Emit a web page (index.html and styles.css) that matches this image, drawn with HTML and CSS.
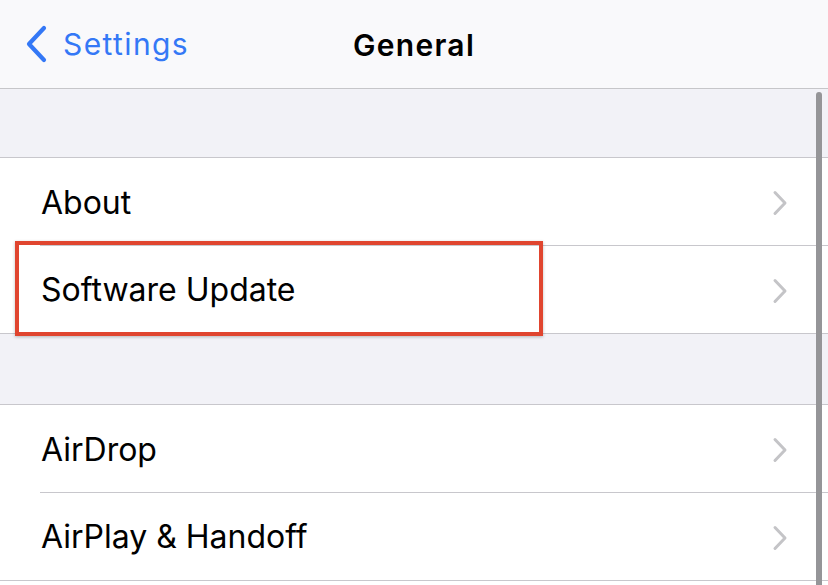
FILE: index.html
```html
<!DOCTYPE html>
<html>
<head>
<meta charset="utf-8">
<link rel="stylesheet" href="styles.css">
</head>
<body>
<div class="screen">
  <header class="nav">
    <div class="back">
      <svg class="back-icon" width="24" height="38" viewBox="0 0 24 38"><path d="M20 3 L5 19 L20 35" fill="none" stroke="#3478f6" stroke-width="4.2" stroke-linecap="round" stroke-linejoin="round"/></svg>
      <span class="back-label">Settings</span>
    </div>
    <div class="title">General</div>
  </header>
  <div class="spacer first"></div>
  <section class="group">
    <div class="row"><span class="label">About</span><svg class="chev" width="16" height="26" viewBox="0 0 16 26"><path d="M3 2.5 L13 13 L3 23.5" fill="none" stroke="#c4c4c7" stroke-width="3" stroke-linecap="round" stroke-linejoin="round"/></svg></div>
    <div class="row"><span class="label">Software Update</span><svg class="chev" width="16" height="26" viewBox="0 0 16 26"><path d="M3 2.5 L13 13 L3 23.5" fill="none" stroke="#c4c4c7" stroke-width="3" stroke-linecap="round" stroke-linejoin="round"/></svg></div>
  </section>
  <div class="spacer second"></div>
  <section class="group">
    <div class="row"><span class="label">AirDrop</span><svg class="chev" width="16" height="26" viewBox="0 0 16 26"><path d="M3 2.5 L13 13 L3 23.5" fill="none" stroke="#c4c4c7" stroke-width="3" stroke-linecap="round" stroke-linejoin="round"/></svg></div>
    <div class="row"><span class="label">AirPlay &amp; Handoff</span><svg class="chev" width="16" height="26" viewBox="0 0 16 26"><path d="M3 2.5 L13 13 L3 23.5" fill="none" stroke="#c4c4c7" stroke-width="3" stroke-linecap="round" stroke-linejoin="round"/></svg></div>
  </section>
  <div class="highlight"></div>
  <div class="scrollbar"></div>
</div>
</body>
</html>
```
FILE: styles.css
```css
* { box-sizing: border-box; }
html, body { margin: 0; padding: 0; }
body {
  font-family: Inter, "Liberation Sans", sans-serif;
  background: #ffffff;
  color: #000;
}
.screen {
  position: relative;
  width: 828px;
  height: 585px;
  overflow: hidden;
  background: #fff;
}
.nav {
  height: 89px;
  background: #f9f9fb;
  border-bottom: 1px solid #c6c6c9;
  display: flex;
  align-items: center;
  justify-content: center;
  position: relative;
}
.back {
  position: absolute;
  left: 24px;
  top: 25px;
  display: flex;
  align-items: center;
  gap: 15px;
}
.back-icon { display: block; }
.back-label {
  color: #3478f6;
  font-size: 30px;
  letter-spacing: 1.4px;
  line-height: 38px;
}
.title {
  font-size: 30px;
  font-weight: 600;
  letter-spacing: 1.3px;
  line-height: 38px;
  margin-top: 1px;
}
.spacer {
  background: #f2f2f7;
}
.spacer.first { height: 68px; }
.spacer.second { height: 70px; }
.group {
  border-top: 1px solid #c8c7cc;
  border-bottom: 1px solid #c8c7cc;
  background: #fff;
}
.row {
  height: 88px;
  display: flex;
  align-items: center;
  justify-content: space-between;
  padding-left: 41px;
  padding-right: 40px;
  position: relative;
}
.row + .row::before {
  content: "";
  position: absolute;
  left: 40px;
  right: 0;
  top: -1px;
  height: 1px;
  background: #c8c7cc;
}
.row + .row { height: 87px; }
.label {
  font-size: 32px;
  letter-spacing: 0;
}
.chev { display: block; margin-top: 2px; }
.highlight {
  position: absolute;
  left: 15px;
  top: 241px;
  width: 528px;
  height: 95px;
  border: 4px solid #e0452f;
  box-shadow: 0 1px 3px rgba(0,0,0,0.25);
}
.scrollbar {
  position: absolute;
  left: 816px;
  top: 92px;
  width: 6px;
  height: 500px;
  border-radius: 3px;
  background: #959598;
}
```
